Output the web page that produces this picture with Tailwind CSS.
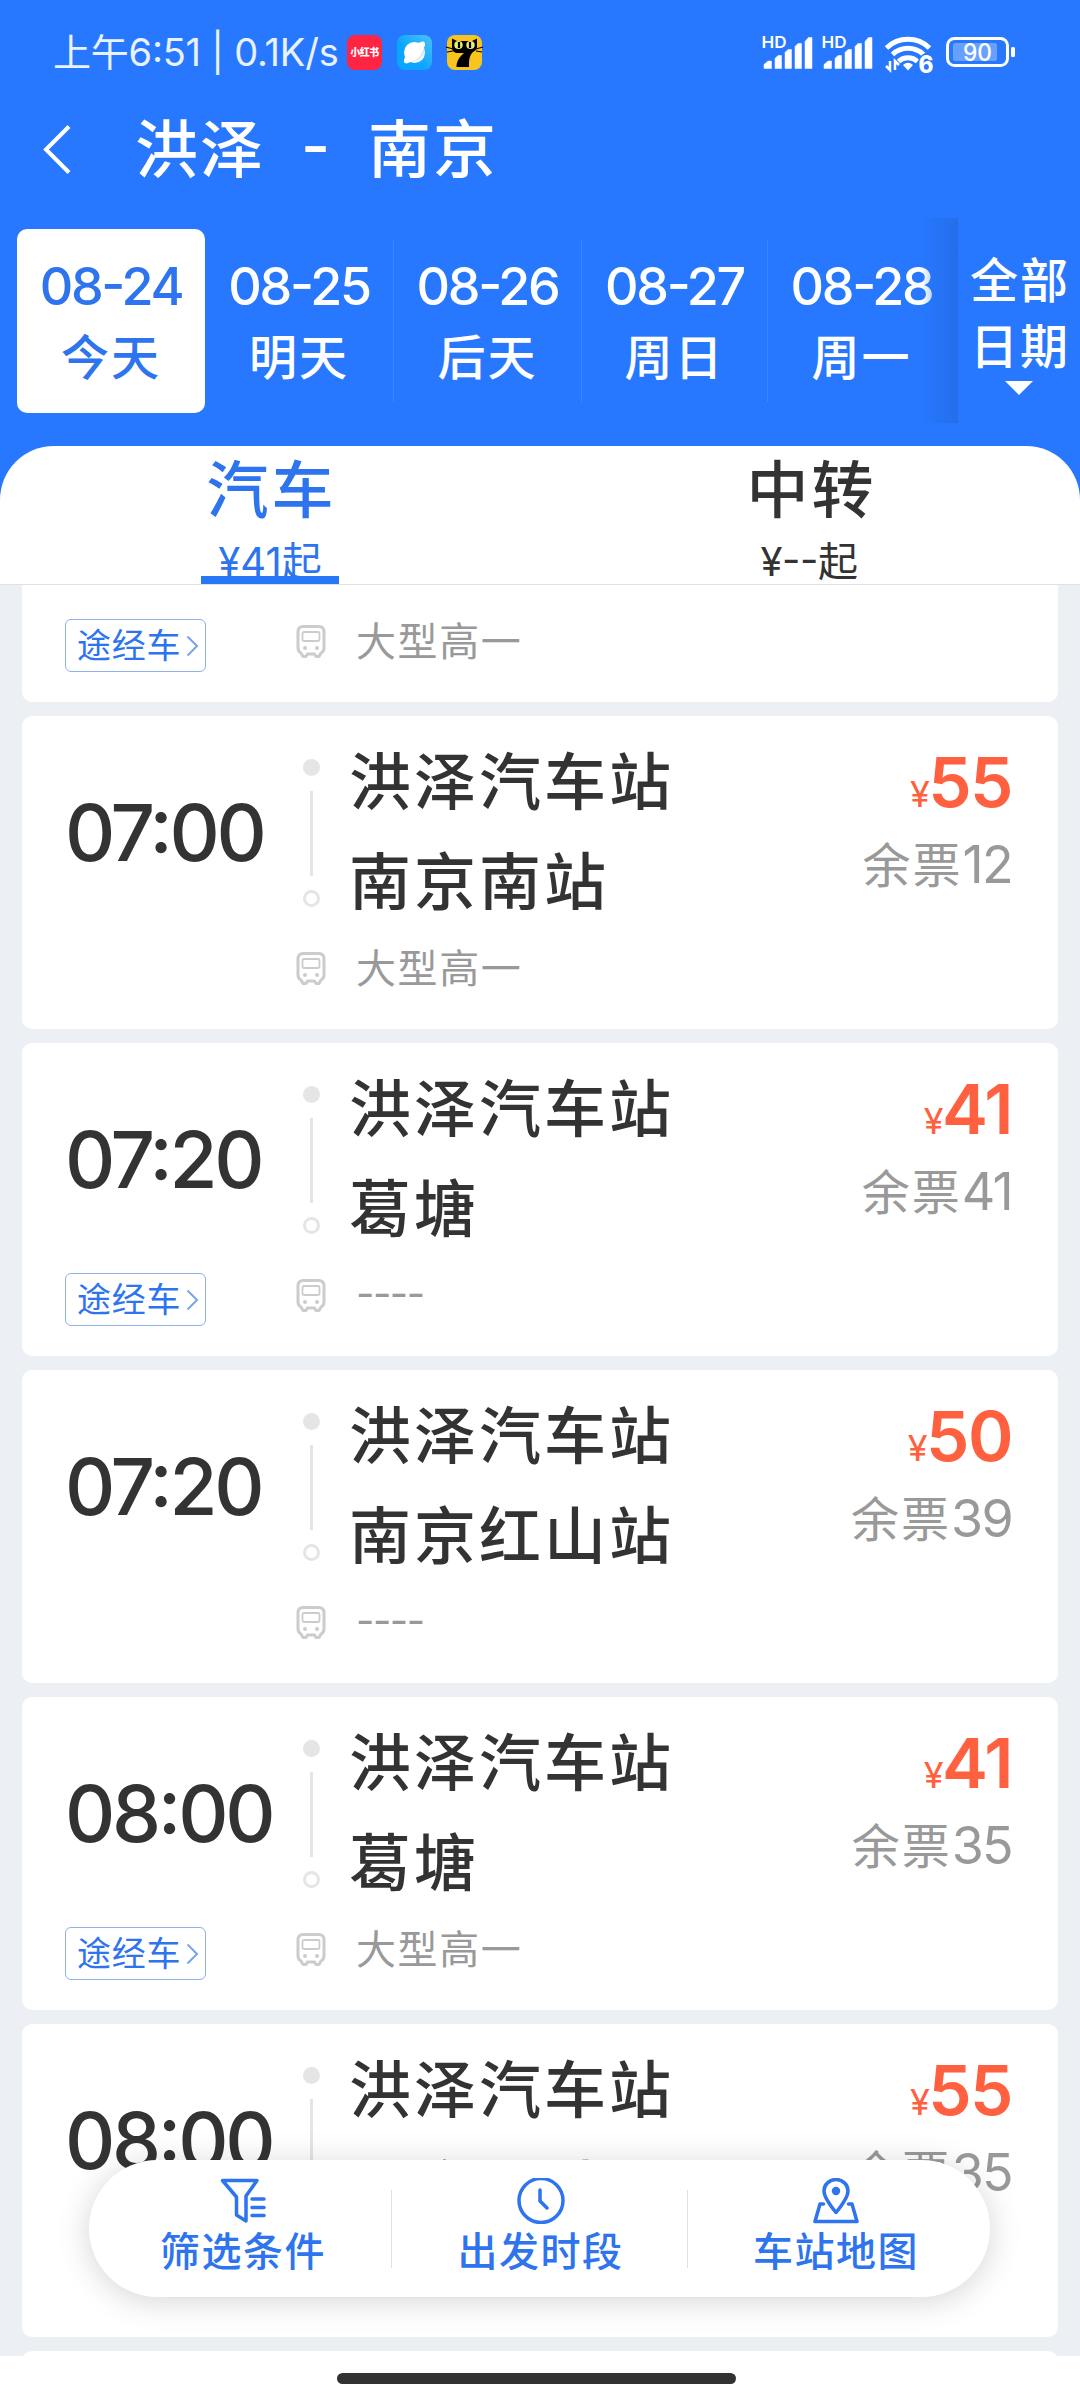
<!DOCTYPE html>
<html lang="zh-CN">
<head>
  <meta charset="UTF-8">
  <meta name="viewport" content="width=device-width, initial-scale=1.0">
  <title>洪泽 - 南京 汽车票</title>
  <script src="https://cdn.jsdelivr.net/npm/@tailwindcss/browser@4"></script>
</head>
<body class="bg-white">
  <div class="relative flex h-[2400px] w-[1080px] flex-col overflow-hidden bg-white font-['Inter','Noto_Sans_CJK_SC',sans-serif] text-[#333]">

    <header class="h-[585px] shrink-0 bg-[#2778ff] text-white">
      <!-- status bar -->
      <div class="flex h-[104px] items-center justify-between pl-[53px] pr-[65px] text-white/90">
        <div class="flex items-center">
          <span class="w-[294px] whitespace-nowrap text-[38px] leading-none tracking-[-0.2px] [font-feature-settings:'case']">上午6:51 | 0.1K/s</span>
          <div class="flex gap-[15px]">
            <div class="flex h-[35px] w-[35px] items-center justify-center rounded-[8px] bg-[#ff2442]">
              <span class="whitespace-nowrap text-[10px] font-black leading-[20px] tracking-[-0.5px] text-white">小红书</span>
            </div>
            <svg class="h-[35px] w-[35px]" viewBox="0 0 35 35">
              <defs>
                <linearGradient id="sky" x1="0" y1="1" x2="1" y2="0"><stop offset=".4" stop-color="#0aa5ff"/><stop offset="1" stop-color="#4cc3f5"/></linearGradient>
              </defs>
              <rect width="35" height="35" rx="8" fill="url(#sky)"/>
              <circle cx="17.5" cy="17.5" r="10.5" fill="#fff"/>
              <path d="M8 28c-2-1-1-5 2-9l5 7c-3 2-6 3-7 2zM27 7c2 1 1 5-2 9l-5-7c3-2 6-3 7-2z" fill="#fff"/>
              <path d="M27 12c2 8-6 15-14 15 7-1 12-7 14-15z" fill="#d7e3f7"/>
            </svg>
            <svg class="h-[35px] w-[35px] overflow-visible" viewBox="0 0 35 35">
              <rect width="35" height="35" rx="8" fill="#f7c51e"/>
              <path d="M5 3.500l5 2.500h15l5-2.500V12c0 3-3 4-5 6-3 4-3 8-3 14H9.500c0-6 3-10 7.500-14H9c-3-1-4-3-4-6z" fill="#000"/>
              <ellipse cx="11.500" cy="10" rx="4.200" ry="4" fill="#e9f06a"/><ellipse cx="23.500" cy="10" rx="4.200" ry="4" fill="#e9f06a"/>
              <path d="M12 7v6M23 7v6" stroke="#000" stroke-width="2.200"/>
              <path d="M-1 12l7 2M0 17l6-1M36 12l-7 2M35 17l-6-1" stroke="#000" stroke-width="1.200"/>
            </svg>
          </div>
        </div>
        <svg class="h-[42px] w-[254px]" viewBox="761 31 254 42" fill="#fff">
          <g id="signal">
            <text x="761.500" y="48" font-size="16" font-weight="600" textLength="25" lengthAdjust="spacingAndGlyphs">HD</text>
            <path d="M764 68.500v-4l4-3.500h3.500v7.500zM775 68.500v-10l3-3h3.500v13zM785 68.500v-16l3-3h3.500v19zM795 68.500v-22l3-3h3.500v25zM805 68.500v-27l3.500-4h3.500v31z" stroke="#fff" stroke-width=".5" stroke-linejoin="round"/>
          </g>
          <use href="#signal" x="60"/>
          <g fill="none" stroke="#fff" stroke-width="5">
            <path d="M886.500 48a31 31 0 0 1 43 0"/>
            <path d="M892.500 54.500a22.500 22.500 0 0 1 31 0"/>
            <path d="M898.500 61.500a14 14 0 0 1 19 0"/>
          </g>
          <path d="M903 65q5-4.500 10 0l-5 5.500z"/>
          <path d="M890 61v9l-4-4M895 70v-9l4 4" fill="none" stroke="#fff" stroke-width="2.500"/>
          <text x="918.500" y="72.500" font-size="24" font-weight="800" textLength="15" lengthAdjust="spacingAndGlyphs" stroke="#2778ff" stroke-width="3" paint-order="stroke">6</text>
          <rect x="947.500" y="38.500" width="60" height="27" rx="7" fill="none" stroke="#fff" stroke-width="3"/>
          <rect x="953" y="43" width="44" height="18" rx="2" fill-opacity=".3"/>
          <rect x="1011" y="47" width="4" height="10" rx="1.500"/>
          <text x="963" y="61" font-size="24" font-weight="500" textLength="29" lengthAdjust="spacingAndGlyphs">90</text>
        </svg>
      </div>

      <!-- route title -->
      <div class="flex h-[90px] items-center">
        <svg class="ml-[40px] h-[50px] w-[34px]" viewBox="0 0 34 50" fill="none" stroke="#fff" stroke-width="4"><path d="M29 2.500L6 25.500l23 23"/></svg>
        <h1 class="ml-[61px] flex text-[63px] font-medium leading-none tracking-[2px]">
          <span>洪泽</span><span class="ml-[36px] w-[67px] [font-feature-settings:'case']">-</span><span>南京</span>
        </h1>
      </div>

      <!-- dates -->
      <div class="flex h-[252px] text-center font-medium">
        <div class="relative flex w-[958px] pl-[17px] pt-[35px]">
          <div class="h-[184px] w-[188px] rounded-[10px] bg-white pt-[25px] text-[#2d74ee]">
            <div class="text-[52px] leading-[66px] tracking-[-2.3px] [font-feature-settings:'case']">08-24</div>
            <div class="mt-[2px] text-[48px] leading-[72px] tracking-[2px]">今天</div>
          </div>
          <div class="h-[184px] w-[188px] pt-[25px]">
            <div class="text-[52px] leading-[66px] tracking-[-2.3px] [font-feature-settings:'case']">08-25</div>
            <div class="mt-[2px] text-[48px] leading-[72px] tracking-[2px]">明天</div>
          </div>
          <div class="mt-[11px] h-[162px] w-px bg-white/10"></div>
          <div class="h-[184px] w-[187px] pt-[25px]">
            <div class="text-[52px] leading-[66px] tracking-[-2.3px] [font-feature-settings:'case']">08-26</div>
            <div class="mt-[2px] text-[48px] leading-[72px] tracking-[2px]">后天</div>
          </div>
          <div class="mt-[11px] h-[162px] w-px bg-white/10"></div>
          <div class="h-[184px] w-[185px] pt-[25px]">
            <div class="text-[52px] leading-[66px] tracking-[-2.3px] [font-feature-settings:'case']">08-27</div>
            <div class="mt-[2px] text-[48px] leading-[72px] tracking-[2px]">周日</div>
          </div>
          <div class="mt-[11px] h-[162px] w-px bg-white/10"></div>
          <div class="h-[184px] w-[187px] pt-[25px]">
            <div class="text-[52px] leading-[66px] tracking-[-2.3px] [font-feature-settings:'case']">08-28</div>
            <div class="mt-[2px] text-[48px] leading-[72px] tracking-[2px]">周一</div>
          </div>
          <div class="absolute right-0 top-[24px] h-[205px] w-[36px] bg-linear-to-r from-[#246ee9]/0 to-[#246ee9]"></div>
        </div>
        <div class="flex flex-1 flex-col items-center pt-[54px]">
          <div class="pl-[2px] text-[48px] leading-[66px] tracking-[2px]">全部<br>日期</div>
          <svg class="mt-px h-[14px] w-[28px]" viewBox="0 0 28 14" fill="#fff"><path d="M0 0h28L14 14z"/></svg>
        </div>
      </div>

      <!-- tabs -->
      <div class="flex h-[139px] rounded-t-[54px] border-b border-[#dfe1e4] bg-white text-center text-[#333]">
        <div class="flex flex-1 flex-col items-center text-[#2d74ee]">
          <div class="h-[86px] pl-[3px] text-[62px] font-medium leading-[89px] tracking-[3px]">汽车</div>
          <div class="h-[44px] w-[138px] overflow-hidden text-[40px] leading-[60px]">¥41起</div>
          <div class="h-2 w-[138px] bg-[#2778f5]"></div>
        </div>
        <div class="flex flex-1 flex-col items-center">
          <div class="h-[86px] pl-[3px] text-[62px] font-medium leading-[89px] tracking-[3px]">中转</div>
          <div class="pr-[2px] text-[40px] leading-[60px] tracking-[-0.5px] [font-feature-settings:'case']">¥--起</div>
        </div>
      </div>
    </header>

    <main class="h-[1771px] shrink-0 overflow-hidden bg-[#eceff3] px-[22px]">
      <div id="trips" class="-mt-[196px] flex flex-col gap-[14px]"></div>
    </main>

    <footer class="flex flex-1 pl-[337px] pt-[17px]">
      <div class="h-[11px] w-[399px] rounded-full bg-[#323232]"></div>
    </footer>

    <!-- floating filter bar -->
    <nav class="absolute left-[89px] top-[2160px] flex h-[137px] w-[901px] items-center rounded-full bg-white text-[40px] font-medium tracking-[1.5px] text-[#2d74ee] shadow-[0_4px_32px_rgba(0,0,0,0.17)]">
      <div class="flex w-[302px] flex-col items-center pl-[6px]">
        <svg class="h-[46px] w-[46px]" viewBox="0 0 46 46" fill="none" stroke="#2d74ee" stroke-width="3.500" stroke-linejoin="round" stroke-linecap="round">
          <path d="M2.500 2.500h34.500l-11 15.500v25l-9.500-6V19z"/>
          <path d="M32 21h12M32 29.500h12M32 37.500h12"/>
        </svg>
        <span class="leading-[56px]">筛选条件</span>
      </div>
      <div class="h-[78px] w-px bg-[#e2e2e2]"></div>
      <div class="flex w-[295px] flex-col items-center pl-[2px]">
        <svg class="h-[46px] w-[48px]" viewBox="0 0 48 46" fill="none" stroke="#2d74ee" stroke-width="3.500" stroke-linecap="round">
          <circle cx="24" cy="22.500" r="22"/>
          <path d="M23 12v11l7 7"/>
        </svg>
        <span class="leading-[56px]">出发时段</span>
      </div>
      <div class="h-[78px] w-px bg-[#e2e2e2]"></div>
      <div class="flex w-[302px] flex-col items-center pr-[6px]">
        <svg class="h-[46px] w-[46px]" viewBox="0 0 46 46" fill="none" stroke="#2d74ee" stroke-width="3.500" stroke-linejoin="round" stroke-linecap="round">
          <path d="M23 34.500C16 26 11 19 11 13a12 11.500 0 0 1 24 0c0 6-5 13-12 21.500z"/>
          <circle cx="23" cy="13" r="3.200" fill="#2d74ee" stroke-width="2"/>
          <path d="M10.500 26H7L2 43.500h42L39 26h-3.500"/>
        </svg>
        <span class="leading-[56px]">车站地图</span>
      </div>
    </nav>
  </div>

  <script>
    const trips = [
      { time: '', from: '', to: '', price: '', left: '', bus: '大型高一', via: true },
      { time: '07:00', from: '洪泽汽车站', to: '南京南站', price: 55, left: 12, bus: '大型高一' },
      { time: '07:20', from: '洪泽汽车站', to: '葛塘', price: 41, left: 41, bus: '----', via: true },
      { time: '07:20', from: '洪泽汽车站', to: '南京红山站', price: 50, left: 39, bus: '----' },
      { time: '08:00', from: '洪泽汽车站', to: '葛塘', price: 41, left: 35, bus: '大型高一', via: true },
      { time: '08:00', from: '洪泽汽车站', to: '南京南站', price: 55, left: 35, bus: '' },
      { time: '', from: '', to: '', price: '', left: '', bus: '' },
    ];

    const viaTag = `
      <div class="mt-[63px] flex h-[53px] w-[141px] items-center justify-between rounded-[6px] border border-[#8fb0e8] pl-[11px] pr-[6px] text-[34px] tracking-[0.7px] text-[#2d74ee]">
        <span class="leading-none">途经车</span>
        <svg class="h-[22px] w-[13px]" viewBox="0 0 13 22" fill="none" stroke="#7ba3ec" stroke-width="2"><path d="M1.500 1.500L11 11l-9.500 9.500"/></svg>
      </div>`;

    const busIcon = `
      <svg class="mt-[45px] h-[33px] w-[30px]" viewBox="0 0 30 33" fill="none" stroke="#ccc" stroke-width="3" stroke-linejoin="round">
        <path d="M7 1.500h16c3 0 5 2 5 5V23c0 3-1 4-3 5l-2 3.500h-3L18.500 29h-7L10 31.500H7L5 28c-2-1-3-2-3-5V6.500c0-3 2-5 5-5z"/>
        <rect x="6.500" y="7" width="17" height="9" rx="1.500" stroke-width="1.800"/>
        <circle cx="9" cy="23" r="2" fill="#ccc" stroke="none"/><circle cx="21" cy="23" r="2" fill="#ccc" stroke="none"/>
      </svg>`;

    document.getElementById('trips').innerHTML = trips.map(t => `
      <article class="flex h-[313px] shrink-0 rounded-[10px] bg-white">
        <div class="w-[264px] pl-[43px] pt-[66px]">
          <div class="h-[101px] text-[78px] font-medium leading-[101px] tracking-[-3.3px] [font-feature-settings:'case']">${t.time}</div>
          ${t.via ? viaTag : ''}
        </div>
        <div class="flex w-[50px] flex-col items-center pt-[43px]">
          <div class="h-[17px] w-[17px] rounded-full bg-[#e5e5e5]"></div>
          <div class="mt-[15px] h-[85px] w-[3px] bg-[#e5e5e5]"></div>
          <div class="mt-[14px] h-[17px] w-[17px] rounded-full border-[3px] border-[#e5e5e5]"></div>
          ${busIcon}
        </div>
        <div class="flex-1 whitespace-nowrap pl-[13px] pt-[16px] text-[62px] font-medium leading-[101px] tracking-[3px]">
          <div class="h-[100px]">${t.from}</div>
          <div class="h-[99px]">${t.to}</div>
          <div class="pl-[7px] text-[40px] font-normal leading-[75px] tracking-[1.6px] text-[#999]">${t.bus.startsWith('-') ? `<span class="tracking-[-1.5px] [font-feature-settings:'case']">${t.bus}</span>` : t.bus}</div>
        </div>
        <div class="pr-[46px] pt-[24px] text-right">
          <div class="h-[83px] text-[69px] font-semibold leading-[84px] tracking-[-1.5px] text-[#ff6140]"><span class="text-[36px] font-normal leading-none">${t.price ? '¥' : ''}</span>${t.price}</div>
          <div class="h-[83px] text-[52px] leading-[83px] tracking-[-1.7px] text-[#999]"><span class="text-[48px] leading-none tracking-[2px]">${t.left ? '余票' : ''}</span>${t.left}</div>
        </div>
      </article>`).join('');
  </script>
</body>
</html>
